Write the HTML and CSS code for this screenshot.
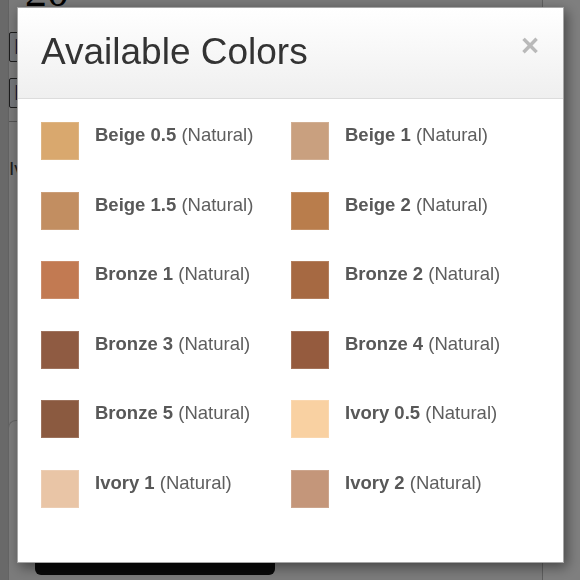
FILE: index.html
```html
<!DOCTYPE html>
<html>
<head>
<meta charset="utf-8">
<link rel="stylesheet" href="styles.css">
</head>
<body>
<div class="page">
  <div class="heading">20</div>
  <div class="opts">
    <span class="opt">D</span>
    <span class="opt">E</span>
  </div>
  <hr class="rule">
  <p class="shade">Iv</p>
  <div class="card">
    <div class="buy"></div>
  </div>
</div>
<div class="backdrop"></div>
<div class="modal">
  <div class="modal-header">
    <h3 class="modal-title">Available Colors</h3>
    <span class="close">&times;</span>
  </div>
  <div class="modal-body">
    <div class="swatch-grid">
      <div class="item"><span class="chip" style="background:#d9a86e"></span><span class="label"><b>Beige 0.5</b> (Natural)</span></div>
      <div class="item"><span class="chip" style="background:#c9a07f"></span><span class="label"><b>Beige 1</b> (Natural)</span></div>
      <div class="item"><span class="chip" style="background:#c28e61"></span><span class="label"><b>Beige 1.5</b> (Natural)</span></div>
      <div class="item"><span class="chip" style="background:#b97d4c"></span><span class="label"><b>Beige 2</b> (Natural)</span></div>
      <div class="item"><span class="chip" style="background:#c27a52"></span><span class="label"><b>Bronze 1</b> (Natural)</span></div>
      <div class="item"><span class="chip" style="background:#a66942"></span><span class="label"><b>Bronze 2</b> (Natural)</span></div>
      <div class="item"><span class="chip" style="background:#8f5b42"></span><span class="label"><b>Bronze 3</b> (Natural)</span></div>
      <div class="item"><span class="chip" style="background:#955b3e"></span><span class="label"><b>Bronze 4</b> (Natural)</span></div>
      <div class="item"><span class="chip" style="background:#8b5a40"></span><span class="label"><b>Bronze 5</b> (Natural)</span></div>
      <div class="item"><span class="chip" style="background:#f9d1a2"></span><span class="label"><b>Ivory 0.5</b> (Natural)</span></div>
      <div class="item"><span class="chip" style="background:#e9c5a6"></span><span class="label"><b>Ivory 1</b> (Natural)</span></div>
      <div class="item"><span class="chip" style="background:#c4967a"></span><span class="label"><b>Ivory 2</b> (Natural)</span></div>
    </div>
  </div>
</div>
</body>
</html>
```

FILE: styles.css
```css
html, body {
  margin: 0;
  padding: 0;
  height: 580px;
  overflow: hidden;
}
body {
  background: linear-gradient(to right, #d2d2d2 8px, #ffffff 8px);
  font-family: "Liberation Sans", Arial, sans-serif;
}
.page {
  margin-left: 8px;
  width: 535px;
  height: 700px;
  background: #f2f2f2;
  border-left: 1px solid #c4c4c4;
  border-right: 1px solid #bdbdbd;
  box-sizing: border-box;
  padding-top: 1px;
}
.heading {
  font: 44px/44px "Liberation Serif", serif;
  color: #000;
  height: 38px;
  margin-top: -31px;
  padding-left: 16px;
}
.opts {
  display: flex;
  flex-direction: column;
  gap: 16px;
  margin-top: 24px;
}
.opt {
  display: block;
  width: 40px;
  height: 28px;
  border: 1px solid #3a3a3a;
  border-radius: 2px;
  background: #e6ebf2;
  color: #1d3a7a;
  font-size: 22px;
  line-height: 28px;
  padding-left: 4px;
}
.rule {
  margin: 13px 0 0 0;
  border: 0;
  border-top: 1px solid #a8a8a8;
  width: 60px;
}
.shade {
  margin: 35px 0 0 0;
  font-size: 19px;
  line-height: 23px;
  color: #3a3a3a;
}
.card {
  margin-top: 240px;
  margin-left: -1px;
  height: 300px;
  border: 1px solid #c8c8c8;
  border-right: 0;
  border-radius: 8px 0 0 0;
  padding: 108px 0 0 26px;
  box-sizing: border-box;
  background: #f6f6f6;
}
.buy {
  width: 240px;
  height: 46px;
  background: #141414;
  border-radius: 6px;
}
.backdrop {
  position: fixed;
  inset: 0;
  background: rgba(0, 0, 0, 0.5);
}
.modal {
  position: fixed;
  left: 17px;
  top: 7px;
  width: 547px;
  height: 556px;
  box-sizing: border-box;
  background: #fff;
  border: 1px solid rgba(0, 0, 0, 0.35);
  box-shadow: 3px 4px 12px rgba(0, 0, 0, 0.45);
  display: flex;
  flex-direction: column;
}
.modal-header {
  height: 91px;
  box-sizing: border-box;
  border-bottom: 1px solid #dcdcdc;
  background: linear-gradient(#ffffff, #efefef);
  display: flex;
  align-items: center;
  justify-content: space-between;
  padding: 0 24px 0 23px;
}
.modal-title {
  margin: 0;
  font-weight: normal;
  font-size: 37px;
  color: #333;
  position: relative;
  top: -1px;
}
.close {
  font-size: 31px;
  font-weight: bold;
  color: #b9b9b9;
  line-height: 1;
  position: relative;
  top: -8px;
}
.modal-body {
  padding: 23px 0 0 23px;
}
.swatch-grid {
  display: grid;
  grid-template-columns: 250px 250px;
  grid-auto-rows: 38px;
  row-gap: 31.6px;
}
.item {
  display: flex;
  align-items: flex-start;
}
.chip {
  flex: none;
  width: 38px;
  height: 38px;
  margin-right: 16px;
  box-shadow: inset 0 0 0 1px rgba(255, 255, 255, 0.15);
}
.label {
  font-size: 18.5px;
  line-height: 24px;
  margin-top: 1px;
  color: #5e5e5e;
  white-space: nowrap;
}
.label b {
  color: #585858;
}
```
